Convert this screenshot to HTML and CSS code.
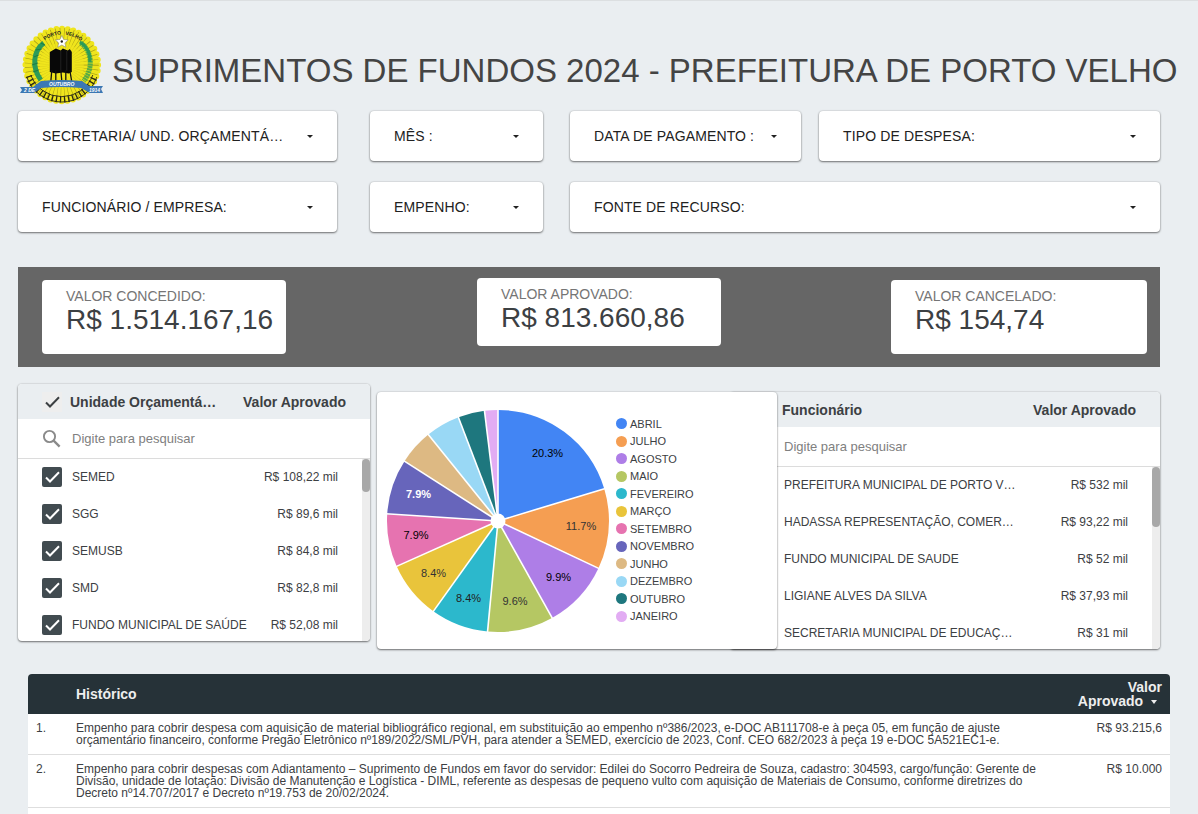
FILE: index.html
```html
<!DOCTYPE html>
<html lang="pt-BR">
<head>
<meta charset="utf-8">
<title>Suprimentos de Fundos 2024</title>
<link rel="stylesheet" href="styles.css">
</head>
<body>
<header class="top">
  <svg class="crest" viewBox="0 0 86 84" width="86" height="84">
    <g transform="translate(.8 0)">
    <circle cx="43" cy="41" r="37" fill="#efe51d"/>
    <circle cx="43" cy="41" r="36.300" fill="none" stroke="#efe51d" stroke-width="6" stroke-linecap="round" stroke-dasharray="0 5.702"/>
    <circle cx="43" cy="41" r="25" fill="none" stroke="#aaa018" stroke-width="24" stroke-dasharray=".5 2.800"/>
    <circle cx="43" cy="41" r="17" fill="none" stroke="#f0e51c" stroke-width="10" opacity=".6"/>
    <path d="M8 53a37 37 0 0 0 70 0" fill="none" stroke="#3b3a18" stroke-width="1"/>
    <path d="M12 51a33 33 0 0 0 62 0" fill="none" stroke="#3b3a18" stroke-width="1"/>
    <path d="M10 52a35 35 0 0 0 66 0" fill="none" stroke="#2b2a14" stroke-width="6.500" stroke-dasharray="1.300 2.800"/>
    <path d="M25 19C14 27 13 44 22 56" fill="none" stroke="#2c9b58" stroke-width="5"/>
    <path d="M22 19l4 2M17 26l6-1M15 33l5-2M13 41l6-2M14 48l6-2" stroke="#1d7c45" stroke-width="1"/>
    <path d="M62 19C73 27 75 44 65 57" fill="none" stroke="#56ac45" stroke-width="5" stroke-dasharray="2 .6"/>
    <path d="M61 18C68 22 72 30 71 38" fill="none" stroke="#2c9b58" stroke-width="3"/>
    <path id="arc" d="M25 17Q43 4 62 17" fill="none"/>
    <text class="crest-name"><textPath href="#arc" startOffset="1">PORTO&#160;&#160;&#160;VELHO</textPath></text>
    <path d="M43 11.500l1.900 4 4.500.4-3.300 3 1 4.300-4.100-2.200-4.100 2.200 1-4.300-3.300-3 4.500-.4z" fill="#fff" stroke="#777" stroke-width=".5"/>
    <circle cx="43" cy="17.500" r="1.200" fill="#222"/>
    <path d="M31 28l6-3.500 5 2 2-2 5 2 2-1.500 2 3v20l-3 1.500-6-1-7 1-6-1.500z" fill="#080808"/>
    <path d="M42 27v20M48 27v20" stroke="#3a3a3a" stroke-width=".5"/>
    <path d="M33 46l-1 12M37 46v11M42 46l1 11M47 46v11M51 46l2 12" stroke="#111" stroke-width="1.300"/>
    </g>
    <path d="M2 63h13l8-6q20-2 41 0l7 5h14l-2 3 2 4H72l-9-5q-20-2-40 0l-7 5H2l2-3z" fill="#3b78b4"/>
    <text class="crest-ribbon" x="31" y="62">OUTUBRO</text>
    <text class="crest-ribbon" x="6" y="68">2 DE</text>
    <text class="crest-ribbon" x="71" y="67.500">1914</text>
  </svg>
  <h1 class="title">SUPRIMENTOS DE FUNDOS 2024 - PREFEITURA DE PORTO VELHO</h1>
</header>

<section class="filters">
  <div class="filter f-secretaria"><span>SECRETARIA/ UND. ORÇAMENTÁ…</span><i class="caret"></i></div>
  <div class="filter f-mes"><span>MÊS :</span><i class="caret"></i></div>
  <div class="filter f-data"><span>DATA DE PAGAMENTO :</span><i class="caret"></i></div>
  <div class="filter f-tipo"><span>TIPO DE DESPESA:</span><i class="caret"></i></div>
</section>
<section class="filters second">
  <div class="filter f-secretaria"><span>FUNCIONÁRIO / EMPRESA:</span><i class="caret"></i></div>
  <div class="filter f-mes"><span>EMPENHO:</span><i class="caret"></i></div>
  <div class="filter f-fonte"><span>FONTE DE RECURSO:</span><i class="caret"></i></div>
</section>

<section class="band">
  <div class="kpi"><div class="kpi-label">VALOR CONCEDIDO:</div><div class="kpi-value">R$ 1.514.167,16</div></div>
  <div class="kpi kpi-mid"><div class="kpi-label">VALOR APROVADO:</div><div class="kpi-value">R$ 813.660,86</div></div>
  <div class="kpi kpi-wide"><div class="kpi-label">VALOR CANCELADO:</div><div class="kpi-value">R$ 154,74</div></div>
</section>

<section class="panels">
  <div class="list units">
    <div class="list-head">
      <span class="head-check"><svg width="20" height="20" viewBox="0 0 20 20"><path d="M4 10.500l4 4 9-9.300" fill="none" stroke="#3c4043" stroke-width="2"/></svg></span>
      <b>Unidade Orçamentá…</b><b class="amount">Valor Aprovado</b>
    </div>
    <div class="search">
      <svg width="20" height="20" viewBox="0 0 20 20"><circle cx="7.500" cy="7.500" r="5.600" fill="none" stroke="#8a8a8a" stroke-width="1.900"/><path d="M11.600 11.600l6 6" stroke="#8a8a8a" stroke-width="2.300"/></svg>
      <span>Digite para pesquisar</span>
    </div>
    <div class="list-body">
      <div class="rows">
        <div class="item"><span class="box"><svg width="20" height="20" viewBox="0 0 20 20"><path d="M4 10.500l4 4 9-9.300"/></svg></span><span class="txt">SEMED</span><span class="txt amount">R$ 108,22 mil</span></div>
        <div class="item"><span class="box"><svg width="20" height="20" viewBox="0 0 20 20"><path d="M4 10.500l4 4 9-9.300"/></svg></span><span class="txt">SGG</span><span class="txt amount">R$ 89,6 mil</span></div>
        <div class="item"><span class="box"><svg width="20" height="20" viewBox="0 0 20 20"><path d="M4 10.500l4 4 9-9.300"/></svg></span><span class="txt">SEMUSB</span><span class="txt amount">R$ 84,8 mil</span></div>
        <div class="item"><span class="box"><svg width="20" height="20" viewBox="0 0 20 20"><path d="M4 10.500l4 4 9-9.300"/></svg></span><span class="txt">SMD</span><span class="txt amount">R$ 82,8 mil</span></div>
        <div class="item"><span class="box"><svg width="20" height="20" viewBox="0 0 20 20"><path d="M4 10.500l4 4 9-9.300"/></svg></span><span class="txt">FUNDO MUNICIPAL DE SAÚDE</span><span class="txt amount">R$ 52,08 mil</span></div>
      </div>
      <div class="track"><div class="thumb"></div></div>
    </div>
  </div>

  <div class="chart">
    <svg class="pie" width="224" height="224" viewBox="-112 -112 224 224">
      <g class="slices" transform="rotate(-90)">
        <circle r="55.500" pathLength="100" stroke="#4285f4" stroke-dasharray="20.3 79.7"/>
        <circle r="55.500" pathLength="100" stroke="#f59e52" stroke-dasharray="11.7 88.3" stroke-dashoffset="-20.3"/>
        <circle r="55.500" pathLength="100" stroke="#ae7ee7" stroke-dasharray="9.9 90.1" stroke-dashoffset="-32"/>
        <circle r="55.500" pathLength="100" stroke="#b5c763" stroke-dasharray="9.6 90.4" stroke-dashoffset="-41.9"/>
        <circle r="55.500" pathLength="100" stroke="#2cb8cc" stroke-dasharray="8.4 91.6" stroke-dashoffset="-51.5"/>
        <circle r="55.500" pathLength="100" stroke="#e9c43b" stroke-dasharray="8.4 91.6" stroke-dashoffset="-59.9"/>
        <circle r="55.500" pathLength="100" stroke="#e673b0" stroke-dasharray="7.7 92.3" stroke-dashoffset="-68.3"/>
        <circle r="55.500" pathLength="100" stroke="#6765bb" stroke-dasharray="8.1 91.9" stroke-dashoffset="-76"/>
        <circle r="55.500" pathLength="100" stroke="#ddb983" stroke-dasharray="5.1 94.9" stroke-dashoffset="-84.1"/>
        <circle r="55.500" pathLength="100" stroke="#99d8f5" stroke-dasharray="5 95" stroke-dashoffset="-89.2"/>
        <circle r="55.500" pathLength="100" stroke="#1e777e" stroke-dasharray="3.85 96.15" stroke-dashoffset="-94.2"/>
        <circle r="55.500" pathLength="100" stroke="#e2acf3" stroke-dasharray="1.95 98.05" stroke-dashoffset="-98.05"/>
      </g>
      <g class="cuts">
        <path d="M0 0V-113"/>
        <path d="M0 0V-113" transform="rotate(73.1)"/>
        <path d="M0 0V-113" transform="rotate(115.2)"/>
        <path d="M0 0V-113" transform="rotate(150.8)"/>
        <path d="M0 0V-113" transform="rotate(185.4)"/>
        <path d="M0 0V-113" transform="rotate(215.6)"/>
        <path d="M0 0V-113" transform="rotate(245.9)"/>
        <path d="M0 0V-113" transform="rotate(273.7)"/>
        <path d="M0 0V-113" transform="rotate(302.6)"/>
        <path d="M0 0V-113" transform="rotate(321.1)"/>
        <path d="M0 0V-113" transform="rotate(339.1)"/>
        <path d="M0 0V-113" transform="rotate(353)"/>
      </g>
      <circle r="7.500" fill="#fff"/>
      <g class="pct">
        <text x="49.500" y="-64">20.3%</text>
        <text x="83" y="9" class="soft">11.7%</text>
        <text x="60.500" y="60">9.9%</text>
        <text x="17" y="84" class="soft">9.6%</text>
        <text x="-29.500" y="81" class="mid">8.4%</text>
        <text x="-64.500" y="56" class="soft">8.4%</text>
        <text x="-82" y="18">7.9%</text>
        <text x="-79.500" y="-23" class="light">7.9%</text>
      </g>
    </svg>
    <ul class="legend">
      <li class="c1">ABRIL</li><li class="c2">JULHO</li><li class="c3">AGOSTO</li><li class="c4">MAIO</li>
      <li class="c5">FEVEREIRO</li><li class="c6">MARÇO</li><li class="c7">SETEMBRO</li><li class="c8">NOVEMBRO</li>
      <li class="c9">JUNHO</li><li class="c10">DEZEMBRO</li><li class="c11">OUTUBRO</li><li class="c12">JANEIRO</li>
    </ul>
  </div>

  <div class="list people">
    <div class="list-head"><b>Funcionário</b><b class="amount">Valor Aprovado</b></div>
    <div class="search"><span>Digite para pesquisar</span></div>
    <div class="list-body">
      <div class="rows">
        <div class="item"><span class="txt">PREFEITURA MUNICIPAL DE PORTO V…</span><span class="txt amount">R$ 532 mil</span></div>
        <div class="item"><span class="txt">HADASSA REPRESENTAÇÃO, COMER…</span><span class="txt amount">R$ 93,22 mil</span></div>
        <div class="item"><span class="txt">FUNDO MUNICIPAL DE SAUDE</span><span class="txt amount">R$ 52 mil</span></div>
        <div class="item"><span class="txt">LIGIANE ALVES DA SILVA</span><span class="txt amount">R$ 37,93 mil</span></div>
        <div class="item"><span class="txt">SECRETARIA MUNICIPAL DE EDUCAÇ…</span><span class="txt amount">R$ 31 mil</span></div>
      </div>
      <div class="track"><div class="thumb"></div></div>
    </div>
  </div>
</section>

<section class="table">
  <div class="thead"><b>Histórico</b><b class="th-value">Valor<br>Aprovado <i class="caret"></i></b></div>
  <div class="tr">
    <span class="num">1.</span>
    <p class="desc"><span>Empenho para cobrir despesa com aquisição de material bibliográfico regional, em substituição ao empenho nº386/2023, e-DOC AB111708-e à peça 05, em função de ajuste</span>
    <span>orçamentário financeiro, conforme Pregão Eletrônico nº189/2022/SML/PVH, para atender a SEMED, exercício de 2023, Conf. CEO 682/2023 à peça 19 e-DOC 5A521EC1-e.</span></p>
    <span class="val">R$ 93.215,6</span>
  </div>
  <div class="tr">
    <span class="num">2.</span>
    <p class="desc"><span>Empenho para cobrir despesas com Adiantamento – Suprimento de Fundos em favor do servidor: Edilei do Socorro Pedreira de Souza, cadastro: 304593, cargo/função: Gerente de</span>
    <span>Divisão, unidade de lotação: Divisão de Manutenção e Logística - DIML, referente as despesas de pequeno vulto com aquisição de Materiais de Consumo, conforme diretrizes do</span>
    <span>Decreto nº14.707/2017 e Decreto nº19.753 de 20/02/2024.</span></p>
    <span class="val">R$ 10.000</span>
  </div>
  <div class="tr"></div>
</section>
</body>
</html>
```
FILE: styles.css
```css
* { box-sizing: border-box; }
html { overflow: hidden; }
body {
  margin: 0;
  height: 814px;
  overflow: hidden;
  background: #eaeef1;
  border-top: 1px solid #dcdfe1;
  font-family: "Liberation Sans", Arial, sans-serif;
  color: #3c4043;
  white-space: nowrap;
}

.top { display: flex; height: 110px; padding: 23px 0 0 18px; }
.crest { flex: none; overflow: visible; }
.crest-name { font-size: 5px; font-weight: bold; fill: #222; }
.crest-ribbon { font-size: 5px; font-weight: bold; font-style: italic; fill: #fff; }
.title { margin: 27px 0 0 8px; font-size: 33px; line-height: 40px; font-weight: normal; color: #444; }

.filters { display: flex; padding-left: 18px; height: 50px; }
.filters.second { margin-top: 21px; }
.filter {
  display: flex; align-items: center; justify-content: space-between;
  height: 50px; padding: 0 24px;
  background: #fff; border-radius: 4px;
  box-shadow: 0 1px 2px rgba(0,0,0,.5), 0 0 2px rgba(0,0,0,.2);
  font-size: 14px; letter-spacing: .13px; color: #212121;
}
.f-secretaria { width: 319px; margin-right: 33px; }
.f-mes { width: 173px; margin-right: 27px; }
.f-data { width: 231px; margin-right: 18px; }
.f-tipo { width: 341px; }
.f-fonte { width: 590px; }
.caret { display: inline-block; border: 3px solid transparent; border-top-color: currentColor; border-bottom: 0; }

.band {
  display: flex; align-items: flex-start;
  width: 1142px; height: 100px; margin: 35px 0 0 18px; padding: 13px 13px 0 24px;
  background: #666;
}
.kpi { width: 244px; height: 74px; padding: 8px 0 0 24px; background: #fff; border-radius: 4px; }
.kpi-mid { height: 68px; margin: -2px 0 0 191px; }
.kpi-wide { width: 256px; margin-left: 170px; }
.kpi-label { font-size: 14px; line-height: 17px; color: #757575; }
.kpi-value { font-size: 28px; line-height: 29px; color: #3c4043; }

.panels { display: flex; align-items: flex-start; margin-top: 17px; padding-left: 18px; }
.list { height: 257px; background: #fff; border-radius: 4px; overflow: hidden; }
.list, .chart { box-shadow: 0 1px 2px rgba(0,0,0,.5), 0 0 2px rgba(0,0,0,.2); }
.units { width: 352px; }
.people { width: 430px; margin: 8px 0 0 -47px; }
.list-head { display: flex; align-items: center; height: 35px; padding: 0 24px; background: #eaeef1; font-size: 14px; }
.people .list-head { padding-left: 52px; }
.head-check { display: flex; width: 20px; height: 20px; margin-right: 8px; background: #eee; }
.amount { margin-left: auto; }
.search { display: flex; align-items: center; height: 40px; padding-left: 24px; border-bottom: 1px solid #dcdcdc; font-size: 13px; color: #808080; }
.search svg { margin-right: 10px; }
.people .search { padding-left: 54px; }
.list-body { display: flex; height: 182px; }
.rows { flex: 1; padding-right: 24px; }
.item { display: flex; align-items: center; height: 37px; padding-left: 24px; font-size: 12px; color: #3c4043; }
.txt { padding-bottom: 2px; }
.people .item { padding-left: 54px; }
.box { display: flex; width: 20px; height: 20px; margin: -1px 10px 0 0; background: #414b50; border-radius: 2px; }
.box path { fill: none; stroke: #fff; stroke-width: 2; }
.track { width: 8px; background: #ededed; }
.thumb { height: 33px; background: #a8a8a8; border-radius: 4px; }
.people .thumb { height: 60px; }

.chart { position: relative; display: flex; width: 400px; height: 257px; margin: 8px 0 0 7px; padding: 17px 0 0 9px; background: #fff; border-radius: 4px; }
.slices circle { fill: none; stroke-width: 111; }
.cuts path { stroke: #fff; stroke-width: 1.6; }
.pct { font-size: 11px; text-anchor: middle; fill: #000; }
.pct .soft { fill: #333; }
.pct .mid { fill: #222; }
.pct .light { fill: #fff; font-weight: bold; }
.legend { margin: 6px 0 0 6px; padding: 0; list-style: none; font-size: 11px; }
.legend li { display: flex; align-items: center; height: 17.5px; }
.legend li::before { content: ""; width: 11px; height: 11px; margin-right: 3px; border-radius: 50%; background: var(--c); }
.c1 { --c: #4285f4; } .c2 { --c: #f59e52; } .c3 { --c: #ae7ee7; } .c4 { --c: #b5c763; }
.c5 { --c: #2cb8cc; } .c6 { --c: #e9c43b; } .c7 { --c: #e673b0; } .c8 { --c: #6765bb; }
.c9 { --c: #ddb983; } .c10 { --c: #99d8f5; } .c11 { --c: #1e777e; } .c12 { --c: #e2acf3; }

.table { width: 1142px; margin: 25px 0 0 28px; background: #fff; border-radius: 4px 4px 0 0; overflow: hidden; }
.thead { display: flex; align-items: center; justify-content: space-between; height: 40px; padding: 0 8px 0 48px; background: #263238; color: #eee; font-size: 14px; line-height: 14px; }
.th-value { text-align: right; }
.th-value .caret { margin: 0 5px 2px 4px; border-width: 4px 3.5px 0; }
.tr { display: flex; padding: 8px; border-bottom: 1px solid #dedede; font-size: 12px; line-height: 12px; }
.num { width: 40px; }
.desc { margin: 0; }
.desc span { display: block; }
.val { margin-left: auto; }
```
